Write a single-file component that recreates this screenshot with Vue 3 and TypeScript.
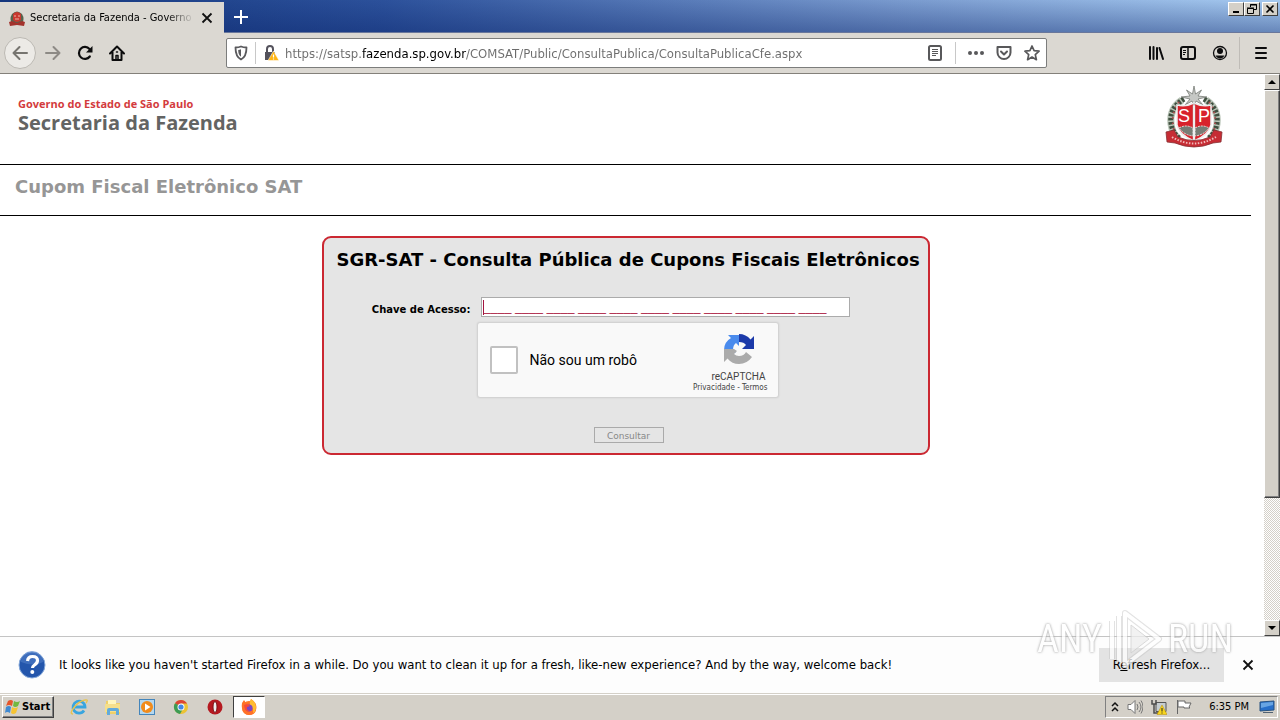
<script setup lang="ts">
import { ref } from 'vue'

const address = ref('https://satsp.fazenda.sp.gov.br/COMSAT/Public/ConsultaPublica/ConsultaPublicaCfe.aspx')
const accessKey = ref(Array(11).fill('____').join(' '))
const notRobot = ref(false)
</script>

<template>
  <div class="screen">
    <header class="titlebar">
      <div class="tab">
        <svg class="crest-small" viewBox="0 0 16 16" aria-hidden="true">
          <path d="M3 4Q0 9 3 14h10q3-5 0-10Q8-1 3 4z" fill="#56634d" />
          <path d="M4 4q4-4 8 0v6q-4 4-8 0z" fill="#c8382f" />
          <path d="M0 12l3-1 5 2 5-2 3 1-1 4-7-1-7 1z" fill="#a3322c" />
          <path d="M5 6h2M9 6h2M6 9h4" stroke="#efb0a6" />
        </svg>
        <span class="tab-title">Secretaria da Fazenda - Governo d</span>
        <button class="plain tab-close" aria-label="Close tab">
          <svg viewBox="0 0 12 12" width="12" height="12"><path d="M1.500 1.500l9 9M10.500 1.500l-9 9" stroke="#111" stroke-width="1.800" /></svg>
        </button>
      </div>
      <button class="plain new-tab" aria-label="New tab">
        <svg viewBox="0 0 16 16" width="16" height="16"><path d="M8 1v14M1 8h14" stroke="#fff" stroke-width="2" /></svg>
      </button>
      <div class="window-buttons">
        <button class="win" aria-label="Minimize"><svg viewBox="0 0 12 10"><path d="M3 8h6" stroke="#000" stroke-width="2" /></svg></button>
        <button class="win" aria-label="Restore"><svg viewBox="0 0 12 10"><path d="M4.500 3V.5h6v5H8M4 1h7M1.500 4.500h6v5h-6zM1 4h7" fill="none" stroke="#000" /></svg></button>
        <button class="win close" aria-label="Close"><svg viewBox="0 0 12 10"><path d="M2.500 1.500l7 7M9.500 1.500l-7 7" stroke="#000" stroke-width="1.600" /></svg></button>
      </div>
    </header>

    <nav class="toolbar">
      <div class="nav-buttons">
        <button class="plain back" aria-label="Back">
          <svg viewBox="0 0 16 16" width="16" height="16" fill="none" stroke="#76746f" stroke-width="2" stroke-linecap="round" stroke-linejoin="round"><path d="M15 8H1.500M7.500 2l-6 6 6 6" /></svg>
        </button>
        <button class="plain tool" aria-label="Forward">
          <svg viewBox="0 0 16 16" width="16" height="16" fill="none" stroke="#8d8a85" stroke-width="2" stroke-linecap="round" stroke-linejoin="round"><path d="M1 8h13.500M8.500 2l6 6-6 6" /></svg>
        </button>
        <button class="plain tool" aria-label="Reload">
          <svg viewBox="0 0 16 16" width="16" height="16"><path d="M12.800 11.500A6 6 0 1 1 12.500 4" fill="none" stroke="#0c0c0d" stroke-width="2.200" stroke-linecap="round" /><path d="M15.500 1v6.500H9z" fill="#0c0c0d" /></svg>
        </button>
        <button class="plain tool" aria-label="Home">
          <svg viewBox="0 0 16 16" width="16" height="16" fill="none" stroke="#0c0c0d" stroke-width="2" stroke-linecap="round" stroke-linejoin="round"><path d="M1 8.500l7-7 7 7M3.500 7v8h9V7" /><path d="M7 14.500v-4h2v4M7.500 7h1" stroke-width="1.500" /></svg>
        </button>
      </div>

      <div class="urlbar">
        <button class="plain shield" aria-label="Tracking protection">
          <svg viewBox="0 0 16 16" width="16" height="16"><path d="M8 1.500c2 .9 4 1 5.500 1 0 5-.5 9.500-5.500 12C3 12 2.500 7.500 2.500 2.500 4 2.500 6 2.400 8 1.500z" fill="none" stroke="#5a5a5d" stroke-width="1.800" stroke-linejoin="round" /><path d="M8 4.300v7.500C5.800 10.200 5.300 8 5.200 4.900 6.300 4.900 7.200 4.700 8 4.300z" fill="#5a5a5d" /></svg>
        </button>
        <i class="separator"></i>
        <button class="plain lock" aria-label="Site information">
          <svg viewBox="0 0 16 16" width="16" height="16"><path d="M4 8V4a3 3 0 0 1 6 0v4" fill="none" stroke="#54525c" stroke-width="2" /><path d="M2 7h10v8H2z" fill="#54525c" /><path d="M10.500 6L16 15.500H5z" fill="#ffb514" stroke="#fff" stroke-width=".5" /><path d="M10.500 9.500v3M10.500 13.500v1" stroke="#fff" stroke-width="1.200" /></svg>
        </button>
        <input v-model="address" class="address" type="text" aria-label="Address" spellcheck="false" />
        <button class="plain reader" aria-label="Reader view">
          <svg viewBox="0 0 16 16" width="16" height="16" fill="none" stroke="#58585a"><rect x="2" y="1" width="12" height="14" rx="1.500" stroke-width="2" /><path d="M5 4.500h6M5 6.500h6M5 8.500h6M5 10.500h4" /></svg>
        </button>
        <i class="separator"></i>
        <button class="plain action" aria-label="Page actions">
          <svg viewBox="0 0 16 16" width="16" height="16" fill="#58585a"><circle cx="2" cy="8" r="2" /><circle cx="8" cy="8" r="2" /><circle cx="14" cy="8" r="2" /></svg>
        </button>
        <button class="plain action" aria-label="Save to Pocket">
          <svg viewBox="0 0 16 16" width="16" height="16" fill="none" stroke="#58585a" stroke-width="2" stroke-linecap="round" stroke-linejoin="round"><path d="M1.500 2h13v5.500a6.500 6.500 0 0 1-13 0z" /><path d="M5 6.500l3 3 3-3" /></svg>
        </button>
        <button class="plain action" aria-label="Bookmark">
          <svg viewBox="0 0 16 16" width="16" height="16" fill="none" stroke="#58585a" stroke-width="1.700" stroke-linejoin="round"><path d="M8 1l2.100 4.700 5 .5-3.800 3.400 1.100 5.100L8 12.100l-4.400 2.600 1.100-5.100L.9 6.200l5-.5z" /></svg>
        </button>
      </div>

      <div class="right-tools">
        <button class="plain tool" aria-label="Library">
          <svg viewBox="0 0 16 16" width="16" height="16" stroke="#0c0c0d" stroke-width="2" stroke-linecap="round"><path d="M2 2v12M5.500 2v12M9 3v11M11.500 3l3.500 11" /></svg>
        </button>
        <button class="plain tool" aria-label="Sidebars">
          <svg viewBox="0 0 16 16" width="16" height="16" fill="none" stroke="#0c0c0d"><rect x="1" y="2" width="14" height="12" rx="2" stroke-width="2" /><path d="M8 2v12" stroke-width="1.500" /><path d="M3 5.500h3M3 7.500h3M3 9.500h2" /></svg>
        </button>
        <button class="plain tool" aria-label="Account">
          <svg viewBox="0 0 16 16" width="16" height="16"><circle cx="8" cy="8" r="6.500" fill="none" stroke="#0c0c0d" stroke-width="1.300" /><circle cx="8" cy="6" r="3" fill="#0c0c0d" /><path d="M3.500 10.500h9Q11 13.500 8 13.500t-4.500-3z" fill="#0c0c0d" /></svg>
        </button>
        <i class="tool-divider"></i>
        <button class="plain menu" aria-label="Menu">
          <svg viewBox="0 0 16 16" width="16" height="16" stroke="#0c0c0d" stroke-width="2" stroke-linecap="round"><path d="M3 3h10M3 8h10M3 13h10" /></svg>
        </button>
      </div>
    </nav>

    <div class="viewport">
      <main class="page">
        <div class="brand">
          <div>
            <p class="gov">Governo do Estado de São Paulo</p>
            <p class="dept">Secretaria da Fazenda</p>
          </div>
          <svg class="crest" viewBox="0 0 60 66" role="img" aria-label="Brasão de São Paulo">
            <path d="M18 15Q5 24 7 39q1 9 8 15M42 15q13 9 11 24-1 9-8 15" fill="none" stroke="#b9c4b7" stroke-width="7" />
            <path d="M20 14Q5 23 7 38q1 9 8 15M40 14q15 9 13 24-1 9-8 15" fill="none" stroke="#3f4f3f" stroke-width="5" stroke-dasharray="2.500 1.500" />
            <path d="M15 17Q6 29 10 45M45 17q9 12 5 28" fill="none" stroke="#a95050" stroke-width="2" stroke-dasharray="1.500 4" />
            <path d="M30 1l1.500 8 6-4-3.500 6 9 1-9 2 5 6-7-4-2 6-2-6-7 4 5-6-9-2 9-1-3.500-6 6 4z" fill="#c6c8c5" stroke="#6a6e69" stroke-width=".7" />
            <path d="M13 20q9 2 17-2 8 4 17 2v20q-2 10-17 16Q15 50 13 40z" fill="#d8222b" stroke="#eee" stroke-width="1.500" />
            <path d="M15 43q7-4 14 0v8q-9-1-14-8zM31 43q7-4 14 0-5 7-14 8z" fill="#777d76" stroke="#e8e5df" stroke-dasharray="2 1" />
            <path d="M29 21l1-3 1 3v34h-2z" fill="#fff" stroke="#bbb" stroke-width=".5" />
            <text x="14" y="37" class="crest-letters">S</text><text x="34" y="37" class="crest-letters">P</text>
            <path d="M2 47l8-2 4 7q16 7 32 0l4-7 8 2-1 10-8 1q-19 8-38 0l-8-1z" fill="#c62c34" stroke="#853034" stroke-width=".8" />
            <path d="M8 52q22 13 44 0" fill="none" stroke="#f1b9b9" stroke-width="2" stroke-dasharray="1.500 1.500" />
          </svg>
        </div>
        <h1 class="product">Cupom Fiscal Eletrônico SAT</h1>

        <form class="panel" @submit.prevent>
          <h2>SGR-SAT - Consulta Pública de Cupons Fiscais Eletrônicos</h2>
          <div class="key-row">
            <label for="key">Chave de Acesso:</label>
            <div class="key-box"><i class="caret"></i><input id="key" v-model="accessKey" type="text" /></div>
          </div>
          <div class="captcha">
            <input id="robot" v-model="notRobot" type="checkbox" />
            <label for="robot">Não sou um robô</label>
            <div class="captcha-brand">
              <svg viewBox="0 0 32 32" width="32" height="32" aria-hidden="true">
                <path d="M5 2h11v11l-3-3q-3 2-3 7l3 2-3 2-4-4H1Q1 9 8 5z" fill="#4a8bed" />
                <path d="M16 1q7 0 11.500 5.500L31 3v13H19l4-4q-2-3-7-3z" fill="#1c3aa9" />
                <path d="M1 16v13l3.500-3.500Q9 31 16 31q8 0 13-7l-6-5q-2 4-7 4-3 0-5-2l3-3-3-2z" fill="#ababab" />
              </svg>
              <span class="captcha-name">reCAPTCHA</span>
              <span class="captcha-links"><a href="#">Privacidade</a> - <a href="#">Termos</a></span>
            </div>
          </div>
          <button class="submit" disabled>Consultar</button>
        </form>
      </main>
      <div class="scrollbar" aria-hidden="true">
        <div class="scroll-button"><svg viewBox="0 0 8 4" width="8" height="4"><path d="M0 4l4-4 4 4z" /></svg></div>
        <div class="track"><div class="thumb"></div></div>
        <div class="scroll-button"><svg viewBox="0 0 8 4" width="8" height="4"><path d="M0 0l4 4 4-4z" /></svg></div>
      </div>
    </div>

    <aside class="notice">
      <svg viewBox="0 0 28 28" width="28" height="28" aria-hidden="true">
        <circle cx="14" cy="14" r="13" fill="#2456ac" stroke="#86a9da" />
        <path d="M3 11a11 11 0 0 1 22 0q-9 5-22 0z" fill="#5583cb" opacity=".55" />
        <path d="M9.500 10q.5-4.500 5-4.500 5 0 5 4 0 2.500-3 4.500-2 1.200-2 3" fill="none" stroke="#fff" stroke-width="3.200" />
        <circle cx="14.300" cy="21" r="2" fill="#fff" />
      </svg>
      <p>It looks like you haven't started Firefox in a while. Do you want to clean it up for a fresh, like-new experience? And by the way, welcome back!</p>
      <button class="refresh">R<u>e</u>fresh Firefox...</button>
      <button class="plain dismiss" aria-label="Dismiss">
        <svg viewBox="0 0 12 12" width="12" height="12"><path d="M1.500 1.500l9 9M10.500 1.500l-9 9" stroke="#111" stroke-width="1.800" /></svg>
      </button>
      <div class="watermark" aria-hidden="true">
        <span>ANY</span>
        <svg viewBox="0 0 60 66" width="60" height="66" fill="none" stroke-linejoin="round">
          <path d="M7 15v38M14 10v46M20 7l34 26-34 26V7z" stroke="#c0c0c0" stroke-width="6" opacity=".6" />
          <path d="M7 15v38M14 10v46M20 7l34 26-34 26V7z" stroke="#fff" stroke-width="4" />
          <path d="M26 19v28l18-14z" stroke="#ccc" fill="#eee" />
        </svg>
        <span>RUN</span>
      </div>
    </aside>

    <footer class="taskbar">
      <button class="start">
        <svg viewBox="0 0 16 16" width="16" height="16" aria-hidden="true"><path d="M3 2q3-2 5 0L7 7Q4 5 1 7z" fill="#e5552b" /><path d="M9 2q3 2 6 0l-2 5q-3 2-5 0z" fill="#72b840" /><path d="M1 8q3-2 5 0l-1 6q-3-2-5 0z" fill="#3f8ad2" /><path d="M7 8q3 2 6 0l-2 6q-3 2-5 0z" fill="#f6c433" /></svg>
        Start
      </button>
      <div class="apps">
        <button class="plain app-button" aria-label="Internet Explorer"><svg viewBox="0 0 18 18"><path d="M14 12.500A6 6 0 1 1 15 9H5" fill="none" stroke="#38a5df" stroke-width="2.800" /><path d="M3 16Q-1 16 4 9.500T15 2q4-1 1 3" fill="none" stroke="#e8c34c" stroke-width="1.300" /></svg></button>
        <button class="plain app-button" aria-label="Explorer"><svg viewBox="0 0 18 18"><path d="M2 3h5l1 2h8v11H2z" fill="#efcf68" /><path d="M4 2h8v5H4z" fill="#fff6bd" /><path d="M1 6h15v8H1z" fill="#f5df8b" /><path d="M3 17v-5q0-2 2-2h8q2 0 2 2v5h-3v-4H6v4z" fill="#62aadb" /></svg></button>
        <button class="plain app-button" aria-label="Media Player"><svg viewBox="0 0 18 18"><rect x="1.500" y="1.500" width="15" height="15" fill="#b4d7ef" stroke="#4485bb" /><circle cx="9" cy="9" r="6" fill="#f18b1b" /><path d="M7 5.500v7L12.500 9z" fill="#fff" /></svg></button>
        <button class="plain app-button" aria-label="Chrome"><svg viewBox="0 0 18 18"><circle cx="9" cy="9" r="7" fill="#ecc334" /><path d="M9 9L3 5.300A7 7 0 0 1 15.100 5.500H9z" fill="#dc4435" /><path d="M3 5.300A7 7 0 0 0 8 16l3.500-6z" fill="#3d9b54" /><circle cx="9" cy="9" r="3.500" fill="#fff" /><circle cx="9" cy="9" r="2.600" fill="#4487e5" /></svg></button>
        <button class="plain app-button" aria-label="Opera"><svg viewBox="0 0 18 18"><circle cx="9" cy="9" r="7.500" fill="#b51920" /><ellipse cx="9" cy="9" rx="2" ry="5.500" fill="#eee" stroke="#791015" /></svg></button>
        <button class="plain app-button active" aria-label="Firefox"><svg viewBox="0 0 18 18"><circle cx="9" cy="10" r="7" fill="#ff7927" /><path d="M2 10Q1 5 4 2l2 3 3 0q2-3 2-4 7 4 5 11-1 5-7 5T2 10z" fill="#ff7128" /><path d="M11 1q5 3 5 8t-3 6q1-5-3-8-1-3 1-6z" fill="#ffbd31" /><circle cx="9" cy="10" r="3.600" fill="#7d45c4" /><path d="M4 7q4-2 6 1l-3 1q-1 3 3 4-5 2-6-6z" fill="#f54a3a" /></svg></button>
      </div>
      <div class="tray">
        <svg viewBox="0 0 8 12" width="8" height="12" fill="none" stroke="#111" stroke-width="1.500"><path d="M1 5l3-3 3 3M1 10l3-3 3 3" /></svg>
        <svg viewBox="0 0 16 16" width="16" height="16" fill="#fff" stroke="#777"><path d="M1 5.500h3l4-4v13l-4-4H1z" /><path d="M10 5q2 3 0 6M12 3q4 5 0 10M14 1.500q4 6 0 13" fill="none" /></svg>
        <svg viewBox="0 0 16 16" width="16" height="16"><path d="M5 3.500h10v9H5z" fill="#c6cdd0" stroke="#555" /><path d="M1 1v4h4V1M3 5v9h5" fill="none" stroke="#4d4d4d" stroke-width="1.500" /><path d="M11 6l5 9.500H6z" fill="#f7d51c" stroke="#b88d00" stroke-width=".5" /><path d="M11 9v3.500M11 13.500v1" stroke="#222" /></svg>
        <svg viewBox="0 0 18 16" width="18" height="16" fill="#fff" stroke="#666"><path d="M2.500 1v14M3 2h7v2h6l-2 4 1 1H9V8H3z" /></svg>
        <time>6:35 PM</time>
        <svg class="desktop" viewBox="0 0 16 14" width="16" height="14"><path d="M1 2l14-1v9l-14 1z" fill="#276fc9" stroke="#285380" /><path d="M2 3l12-1v3L2 8z" fill="#68a5e3" /><path d="M4 12h10v1H4z" fill="#526272" /></svg>
      </div>
    </footer>
  </div>
</template>

<style>
body { margin: 0; }
</style>

<style scoped>
* { box-sizing: border-box; }
.screen { display: flex; flex-direction: column; height: 100vh; min-height: 560px; overflow: hidden; background: #fff; color: #000; font: 13px/16px "DejaVu Sans Condensed", "Noto Sans", sans-serif; }
button, input { font: inherit; margin: 0; }
p, h1, h2 { margin: 0; }
svg { display: block; flex: none; }
.plain { display: flex; align-items: center; justify-content: center; padding: 0; border: 0; background: transparent; }

.titlebar { display: flex; flex: none; height: 33px; border-bottom: 1px solid #69779b; background: linear-gradient(rgba(10, 36, 106, 0), rgba(10, 36, 106, 0.4)), linear-gradient(90deg, #14367d, #2c519b 30%, #799ace 70%, #a6caf0); }
.tab { display: flex; align-items: center; width: 224px; height: 31px; margin-top: 2px; padding: 0 11px 0 9px; background: #dbd8d2; font-size: 11px; }
.crest-small { width: 16px; height: 16px; }
.tab-title { flex: 1; min-width: 0; margin: 0 0 0 5px; white-space: nowrap; mask-image: linear-gradient(90deg, #000 80%, transparent 96%); }
.new-tab { width: 34px; height: 33px; }
.window-buttons { display: flex; margin: 2px 2px 0 auto; }
.win { width: 16px; height: 14px; padding: 0; border: 1px solid; border-color: #fff #404040 #404040 #fff; background: #d4d0c8; }
.win.close { margin-left: 2px; }
.win svg { width: 12px; height: 10px; margin: auto; }

.toolbar { display: flex; flex: none; align-items: center; height: 41px; border-bottom: 1px solid #83807a; background: #dbd8d2; }
.nav-buttons { display: flex; align-items: center; width: 226px; padding-left: 4px; }
.back { width: 32px; height: 32px; margin-right: 1px; border: 1px solid #bcb9b3; border-radius: 50%; background: #eceae6; }
.tool { width: 32px; height: 32px; }
.urlbar { display: flex; flex: 1; align-items: center; height: 30px; border: 1px solid #7c7d7c; border-radius: 2px; background: #fff; }
.shield { width: 28px; height: 28px; }
.separator { width: 1px; height: 22px; background: #c8c8c8; }
.lock { width: 29px; height: 28px; }
.address { flex: 1; min-width: 0; height: 28px; padding: 0; border: 0; outline: 0; color: #666; background: linear-gradient(90deg, #6c6c6c 77px, #000 77px 181px, #6c6c6c 181px) text; -webkit-text-fill-color: transparent; }
.reader { width: 28px; margin-right: 6px; }
.separator + .action { margin-left: 6px; }
.action { width: 28px; }
.right-tools { display: flex; align-items: center; width: 233px; padding-left: 93px; }
.tool-divider { width: 1px; height: 32px; margin: 0 5px 0 3px; background: #bfbcb7; }
.menu { width: 32px; height: 32px; }

.viewport { display: flex; flex: 1; min-height: 0; }
.page { flex: 1; min-width: 0; padding-right: 13px; overflow: hidden; }
.brand { display: flex; justify-content: space-between; height: 91px; padding: 11px 27px 0 18px; border-bottom: 1px solid #000; }
.brand p { font-family: "Open Sans", sans-serif; font-weight: 700; white-space: nowrap; }
.brand .gov { margin-top: 11px; color: #d33b3d; font-size: 11px; line-height: 16px; }
.brand .dept { color: #636463; font-size: 20px; line-height: 22px; }
.crest { width: 60px; height: 66px; }
.crest-letters { fill: #fff; font: 18px "Liberation Sans", sans-serif; }
.product { height: 51px; padding: 11px 15px 0; border-bottom: 1px solid #000; color: #969696; font: 700 18px/22px "DejaVu Sans", sans-serif; }
.panel { display: flex; flex-direction: column; width: 608px; margin: 20px auto 0; height: 219px; padding: 11px 0 0; border: 2px solid #cb2832; border-radius: 9px; background: #e5e5e5; font-family: "DejaVu Sans", sans-serif; }
.panel h2 { padding-left: 13px; font-size: 18px; line-height: 22px; white-space: nowrap; }
.key-row { display: flex; align-items: center; margin-top: 26px; }
.key-row label { width: 147px; padding-top: 6px; font-size: 10px; font-weight: 700; line-height: 14px; text-align: right; white-space: nowrap; }
.key-box { display: flex; align-items: center; width: 369px; height: 20px; margin-left: 10px; border: 1px solid #ababab; background: #fff; }
.caret { width: 1px; height: 15px; margin-left: 1px; background: #a3153f; }
.key-box input { flex: 1; min-width: 0; height: 18px; padding: 2px 0 0; border: 0; outline: 0; background: transparent; color: #a3002f; font: 14px/16px "Liberation Serif", serif; }
.captcha { display: flex; align-items: center; width: 302px; height: 76px; margin: 5px 0 0 153px; padding: 0 10px 0 12px; border: 1px solid #d3d3d3; border-radius: 3px; background: #f9f9f9; box-shadow: 0 0 2px rgba(0, 0, 0, 0.1); }
.captcha > input { appearance: none; width: 28px; height: 28px; border: 2px solid #c1c1c1; border-radius: 2px; background: #fff; }
.captcha > label { margin-left: 12px; font: 14px/18px Roboto, sans-serif; white-space: nowrap; }
.captcha-brand { display: flex; flex-direction: column; align-items: flex-end; margin: 5px 0 0 auto; color: #444; }
.captcha-brand svg { margin-right: 13px; }
.captcha-name { margin: 6px 2px 0 0; font: 10px/12px Roboto, sans-serif; }
.captcha-links { font: 8px/10px "DejaVu Sans Condensed", sans-serif; white-space: nowrap; }
.captcha-links a { color: inherit; text-decoration: none; }
.submit { align-self: center; width: 70px; height: 16px; margin: 29px 0 0 6px; padding: 1px 0 0; border: 1px solid #aaa; background: #e5e5e5; color: #888; font-size: 9px; line-height: 14px; }

.scrollbar { display: flex; flex-direction: column; width: 16px; background: #eceae6; }
.scroll-button { display: flex; align-items: center; justify-content: center; flex: none; height: 16px; border: 1px solid; border-color: #fff #404040 #404040 #fff; background: #d4d0c8; }
.track { flex: 1; background: repeating-conic-gradient(#fff 0 25%, #d4d0c8 0 50%) 0 0 / 2px 2px; }
.thumb { height: 77%; border: 1px solid; border-color: #fff #404040 #404040 #fff; box-shadow: inset -1px -1px #808080; background: #d4d0c8; }

.notice { position: relative; display: flex; flex: none; align-items: center; height: 57px; padding: 0 26px 0 18px; border-top: 1px solid #c4c4c4; background: #fdfdfd; }
.notice p { flex: 1; margin-left: 13px; white-space: nowrap; }
.refresh { width: 125px; height: 34px; padding: 0; border: 0; background: #e3e3e3; }
.dismiss { width: 12px; margin-left: 18px; }
.watermark { position: absolute; right: 47px; top: -31px; display: flex; align-items: center; gap: 3px; pointer-events: none; opacity: 0.75; color: #fff; font: 38px/42px "Roboto Condensed", Roboto, sans-serif; text-shadow: 0 0 2px #999, 0 0 3px #aaa; }

.taskbar { display: flex; flex: none; align-items: center; height: 27px; border-top: 1px solid #d4d0c8; box-shadow: inset 0 1px #fff; background: #d4d0c8; font-size: 11px; }
.start { display: flex; align-items: center; gap: 1px; width: 52px; height: 22px; margin-left: 2px; padding: 0 2px; border: 1px solid; border-color: #fff #404040 #404040 #fff; box-shadow: inset -1px -1px #808080; background: #d4d0c8; font-weight: 700; }
.apps { display: flex; gap: 2px; margin-left: 9px; }
.app-button { width: 32px; height: 22px; }
.app-button svg { width: 18px; height: 18px; }
.app-button.active { border: 1px solid; border-color: #404040 #fff #fff #404040; background: #fff; }
.tray { display: flex; align-items: center; gap: 8px; height: 22px; margin: 0 2px 0 auto; padding: 0 2px 0 5px; border: 1px solid; border-color: #808080 #fff #fff #808080; white-space: nowrap; }
.tray time { margin-left: 8px; }
.desktop { margin-left: 2px; }
</style>
